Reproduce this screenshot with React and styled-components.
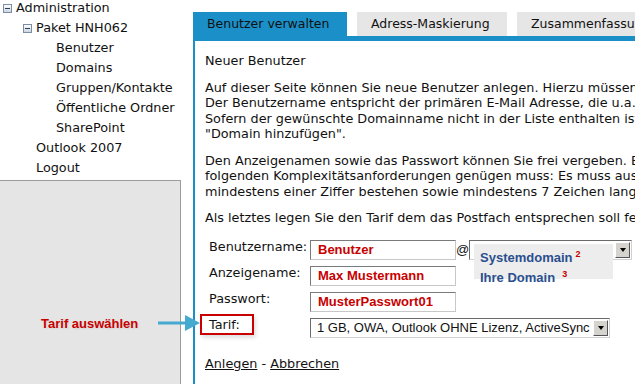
import React from "react";
import styled, { createGlobalStyle } from "styled-components";

const GlobalStyle = createGlobalStyle`
  body {
    margin: 0;
    background: #fff;
    font-family: "DejaVu Sans", Verdana, sans-serif;
    font-size: 12.8px;
    color: #111;
  }
  #root {
    width: 635px;
    height: 384px;
    overflow: hidden;
  }
`;

const BLUE = "#1b8fc8";
const RED = "#c80000";

const Page = styled.div`
  position: relative;
  display: flex;
  width: 635px;
  height: 384px;
  overflow: hidden;
`;

const Sidebar = styled.div`
  width: 181px;
  flex-shrink: 0;
  display: flex;
  flex-direction: column;
`;

const Tree = styled.div`
  height: 180px;
  box-sizing: border-box;
`;

const TreeRow = styled.div`
  display: flex;
  align-items: flex-start;
  height: 20px;
  line-height: 15px;
  padding-left: ${(p) => p.$indent}px;
  white-space: nowrap;
`;

const Toggle = styled.svg`
  width: 9px;
  height: 9px;
  margin: 4px 4px 0 0;
  flex-shrink: 0;
`;

const SidePanel = styled.div`
  flex: 1;
  background: #e5e5e5;
  border-top: 1px solid #9c9c9c;
  border-right: 1px solid #9c9c9c;
`;

const Main = styled.div`
  margin-left: 12px;
  flex: 1;
  min-width: 0;
  overflow: hidden;
`;

const TabBar = styled.div`
  display: flex;
  gap: 10px;
  padding-top: 12px;
  width: 700px;
`;

const Tab = styled.div`
  height: 24px;
  line-height: 24px;
  padding: 0 14px;
  width: ${(p) => p.$w}px;
  box-sizing: border-box;
  flex-shrink: 0;
  background: ${(p) => (p.$active ? BLUE : "#e6e6e6")};
  white-space: nowrap;
  overflow: hidden;
  font-size: 12.5px;
`;

const Strip = styled.div`
  height: 5px;
  background: ${BLUE};
`;

const Content = styled.div`
  border-left: 2px solid ${BLUE};
  padding: 12px 0 30px 10px;
  width: 700px;
`;

const Para = styled.p`
  margin: 0 0 11px;
  line-height: 15.5px;
  white-space: nowrap;
`;

const Form = styled.div`
  display: grid;
  grid-template-columns: 105px auto;
  row-gap: 6px;
  padding-top: 3px;
  justify-content: start;
`;

const Label = styled.div`
  padding: 0 0 0 4px;
  line-height: 13px;
  height: 20px;
  box-sizing: border-box;
  white-space: nowrap;
`;

const HighlightLabel = styled.div`
  margin: -4px 0 0 -5px;
  width: 54px;
  height: 21px;
  box-sizing: border-box;
  border: 2px solid ${RED};
  padding: 2px 0 0 7px;
  line-height: 14px;
  box-shadow: 2px 3px 4px rgba(0, 0, 0, 0.12);
`;

const Field = styled.div`
  display: flex;
  align-items: center;
  height: 20px;
`;

const TextBox = styled.div`
  width: 146px;
  height: 20px;
  box-sizing: border-box;
  border: 1px solid #c8c8c8;
  border-top-color: #7a7a7a;
  border-left-color: #7a7a7a;
  padding-left: 7px;
  line-height: 18px;
  font-family: "Liberation Sans", Arial, sans-serif;
  font-weight: bold;
  font-size: 13px;
  color: ${RED};
  background: #fff;
`;

const At = styled.span`
  width: 13px;
  text-align: center;
  font-family: "Liberation Sans", Arial, sans-serif;
  font-size: 13px;
`;

const SelectBox = styled.div`
  position: relative;
  width: ${(p) => p.$w}px;
  height: 20px;
  box-sizing: border-box;
  border: 1px solid #d0d0d0;
  border-top-color: #6a6a6a;
  border-left-color: #6a6a6a;
  background: #fff;
  display: flex;
  align-items: center;
  justify-content: space-between;
  padding: 0 1px 0 6px;
  font-family: "Liberation Sans", Arial, sans-serif;
  font-size: 13px;
  white-space: nowrap;
`;

const DropButton = styled.div`
  width: 15px;
  height: 16px;
  box-sizing: border-box;
  background: #d6d3ce;
  border: 1px solid #fff;
  border-right-color: #555;
  border-bottom-color: #555;
  display: flex;
  align-items: center;
  justify-content: center;
`;

const Arrow = styled.span`
  width: 0;
  height: 0;
  border-left: 3.5px solid transparent;
  border-right: 3.5px solid transparent;
  border-top: 4px solid #000;
`;

const OptionList = styled.div`
  position: absolute;
  left: 4px;
  top: 3px;
  width: 139px;
  height: 35px;
  background: #ededed;
  padding: 2px 0 0 6px;
  box-sizing: border-box;
  font-family: "Liberation Sans", Arial, sans-serif;
  font-weight: bold;
  font-size: 13px;
  color: #2a4f8e;
  line-height: 16px;
`;

const Note = styled.sup`
  color: ${RED};
  font-size: 9px;
  margin-left: ${(p) => p.$gap}px;
  vertical-align: 5px;
`;

const Actions = styled.div`
  margin-top: 18px;
  line-height: 15.5px;
`;

const ActionLink = styled.a`
  color: #111;
  text-decoration: underline;
`;

const Callout = styled.div`
  position: absolute;
  left: 41px;
  top: 314px;
  display: flex;
  align-items: center;
`;

const CalloutText = styled.span`
  font-family: "Liberation Sans", Arial, sans-serif;
  font-weight: bold;
  font-size: 13px;
  color: ${RED};
  width: 117px;
  text-shadow: 1px 1px 2px rgba(0, 0, 0, 0.08);
`;

const MinusIcon = () => (
  <Toggle viewBox="0 0 9 9">
    <defs>
      <linearGradient id="mg" x1="0" y1="0" x2="0" y2="1">
        <stop offset="0" stopColor="#ffffff" />
        <stop offset="1" stopColor="#c9d3de" />
      </linearGradient>
    </defs>
    <rect x="0.5" y="0.5" width="8" height="8" fill="url(#mg)" stroke="#7c8ea5" />
    <rect x="2" y="4" width="5" height="1" fill="#2b3d55" />
  </Toggle>
);

const CalloutArrow = () => (
  <svg width="44" height="18" viewBox="0 0 44 18">
    <rect x="0" y="7.5" width="30" height="3" fill="#46a9cf" />
    <polygon points="27,1 42,9 27,17" fill="#46a9cf" />
  </svg>
);

export default function App() {
  return (
    <>
      <GlobalStyle />
      <Page>
        <Sidebar>
          <Tree>
            <TreeRow $indent={3}>
              <MinusIcon />
              Administration
            </TreeRow>
            <TreeRow $indent={23}>
              <MinusIcon />
              Paket HNH062
            </TreeRow>
            <TreeRow $indent={56}>Benutzer</TreeRow>
            <TreeRow $indent={56}>Domains</TreeRow>
            <TreeRow $indent={56}>Gruppen/Kontakte</TreeRow>
            <TreeRow $indent={56}>Öffentliche Ordner</TreeRow>
            <TreeRow $indent={56}>SharePoint</TreeRow>
            <TreeRow $indent={36}>Outlook 2007</TreeRow>
            <TreeRow $indent={36}>Logout</TreeRow>
          </Tree>
          <SidePanel />
        </Sidebar>

        <Main>
          <TabBar>
            <Tab $active $w={154}>Benutzer verwalten</Tab>
            <Tab $w={150}>Adress-Maskierung</Tab>
            <Tab $w={150}>Zusammenfassung</Tab>
          </TabBar>
          <Strip />
          <Content>
            <Para>Neuer Benutzer</Para>
            <Para>
              Auf dieser Seite können Sie neue Benutzer anlegen. Hierzu müssen Sie zunächst
              <br />
              Der Benutzername entspricht der primären E-Mail Adresse, die u.a. auch
              <br />
              Sofern der gewünschte Domainname nicht in der Liste enthalten ist, klicken
              <br />
              "Domain hinzufügen".
            </Para>
            <Para>
              Den Anzeigenamen sowie das Passwort können Sie frei vergeben. Beachten
              <br />
              folgenden Komplexitätsanforderungen genügen muss: Es muss aus Groß-
              <br />
              mindestens einer Ziffer bestehen sowie mindestens 7 Zeichen lang sein.
            </Para>
            <Para>Als letztes legen Sie den Tarif dem das Postfach entsprechen soll festlegen.</Para>

            <Form>
              <Label>Benutzername:</Label>
              <Field>
                <TextBox>Benutzer</TextBox>
                <At>@</At>
                <SelectBox $w={163}>
                  <span />
                  <DropButton>
                    <Arrow />
                  </DropButton>
                  <OptionList>
                    <div>
                      Systemdomain<Note $gap={3}>2</Note>
                    </div>
                    <div>
                      Ihre Domain<Note $gap={7}>3</Note>
                    </div>
                  </OptionList>
                </SelectBox>
              </Field>

              <Label>Anzeigename:</Label>
              <Field>
                <TextBox>Max Mustermann</TextBox>
              </Field>

              <Label>Passwort:</Label>
              <Field>
                <TextBox>MusterPasswort01</TextBox>
              </Field>

              <HighlightLabel>Tarif:</HighlightLabel>
              <Field>
                <SelectBox $w={300}>
                  <span>1 GB, OWA, Outlook OHNE Lizenz, ActiveSync</span>
                  <DropButton>
                    <Arrow />
                  </DropButton>
                </SelectBox>
              </Field>
            </Form>

            <Actions>
              <ActionLink href="#!">Anlegen</ActionLink> - <ActionLink href="#!">Abbrechen</ActionLink>
            </Actions>
          </Content>
        </Main>

        <Callout>
          <CalloutText>Tarif auswählen</CalloutText>
          <CalloutArrow />
        </Callout>
      </Page>
    </>
  );
}
